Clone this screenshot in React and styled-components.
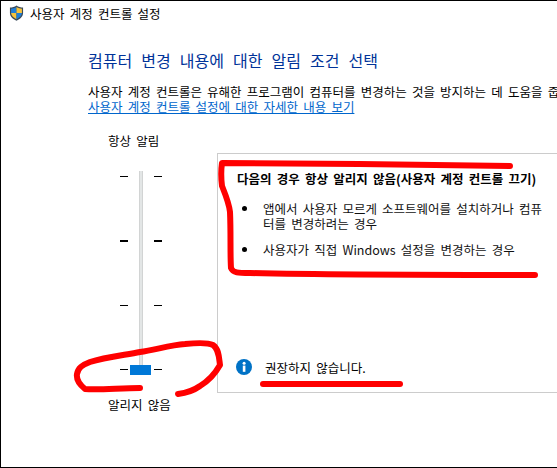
import React from "react";
import styled, { createGlobalStyle } from "styled-components";

const Global = createGlobalStyle`
  html, body { margin: 0; padding: 0; background: #fff; }
  body { width: 557px; height: 468px; overflow: hidden; }
`;
const FONT = `"Noto Sans CJK KR", "Noto Sans", sans-serif`;

const Win = styled.div`
  position: relative; box-sizing: border-box; width: 557px; height: 468px;
  border: 1px solid #000; border-right: 0; background: #fff; overflow: hidden;
  font: 12.5px/15px ${FONT}; color: #000; white-space: nowrap; word-spacing: 2.4px;
  display: flex; flex-direction: column;
`;
const TitleBar = styled.header`
  display: flex; align-items: center; gap: 6px; height: 24px; padding-left: 8px;
`;
const Body = styled.main`
  display: flex; flex-direction: column; padding: 25px 0 0 87px;
`;
const Heading = styled.h1`
  margin: 0; font: 400 16px/20px ${FONT}; color: #003399; word-spacing: 5.5px;
`;
const Intro = styled.p`margin: 14px 0 0;`;
const HelpLink = styled.a`color: #0066cc; text-decoration: underline;`;
const Row = styled.div`display: flex; align-items: flex-start; margin: 19px 0 0;`;
const Slider = styled.div`
  width: 216px; flex: none; padding-left: 107px; box-sizing: border-box;
  display: flex; flex-direction: column; align-items: flex-start;
`;
const Track = styled.div`
  position: relative; width: 42px; height: 204px; margin: 23px 0 22px 12px;
  display: flex; flex-direction: column; justify-content: space-between; padding: 5px 0; box-sizing: border-box;
`;
const Rail = styled.div`
  position: absolute; left: 19px; top: 0; bottom: 0; width: 4px;
  background: #e3e6e6; border-left: 1px solid #d2d4d4; border-right: 1px solid #d2d4d4; box-sizing: border-box;
`;
const Thumb = styled.div`
  position: absolute; left: 10px; bottom: 0; width: 21px; height: 10px; background: #0078d7;
`;
const TickRow = styled.div`display: flex; justify-content: space-between;`;
const Tick = styled.i`display: block; width: 8px; height: ${p => p.$h}px; background: #000;`;
const Notes = styled.section`
  box-sizing: border-box; width: 400px; height: 240px; flex: none; margin-top: 20px;
  border: 1px solid #ccc; padding: 17px 0 0 19px; display: flex; flex-direction: column;
`;
const NoteTitle = styled.h2`margin: 0; font: 700 12.5px/15px ${FONT};`;
const Bullets = styled.ul`
  margin: 15px 0 0; padding: 0 0 0 26px; width: 284px; white-space: normal; list-style: none;
`;
const Bullet = styled.li`
  position: relative; margin-bottom: 11px; word-break: break-all; line-height: 15px; color: #111;
  &::before {
    content: ""; position: absolute; left: -21px; top: 5px; width: 5px; height: 5px; border-radius: 50%; background: #000;
  }
`;
const Recommend = styled.div`
  display: flex; align-items: center; gap: 13px; margin: 91px 0 0 -1px;
`;
const Scribbles = styled.svg`
  position: absolute; left: -1px; top: -1px; width: 557px; height: 468px; pointer-events: none; filter: blur(0.5px);
`;

const Shield = () => (
  <svg width="15" height="16" viewBox="0 0 16 16" preserveAspectRatio="none" style={{ flex: "none" }}>
    <path d="M8 .5 C10 2 12.6 2.6 15 2.6 V8 C15 11.6 12 14 8 15.7 C4 14 1 11.6 1 8 V2.6 C3.4 2.6 6 2 8 .5Z" fill="#3a4a5a" />
    <path d="M8 2 V8 H2.2 V3.7 C4.2 3.6 6.3 3.1 8 2Z" fill="#1f7fd8" />
    <path d="M8 2 C9.7 3.1 11.8 3.6 13.8 3.7 V8 H8Z" fill="#f6c33c" />
    <path d="M2.2 8 H8 V14.2 C5 12.8 2.5 11 2.2 8Z" fill="#f6c33c" />
    <path d="M8 8 H13.8 C13.5 11 11 12.8 8 14.2Z" fill="#1f7fd8" />
  </svg>
);

const InfoIcon = () => (
  <svg width="16" height="16" viewBox="0 0 16 16" style={{ flex: "none" }}>
    <circle cx="8" cy="8" r="8" fill="#0072c6" />
    <rect x="6.8" y="6.6" width="2.6" height="6.2" fill="#fff" />
    <circle cx="8.1" cy="4.2" r="1.5" fill="#fff" />
  </svg>
);

const ticks = [1, 2, 1, 1];

export default function App() {
  return (
    <Win>
      <Global />
      <TitleBar>
        <Shield />
        <span>사용자 계정 컨트롤 설정</span>
      </TitleBar>
      <Body>
        <Heading>컴퓨터 변경 내용에 대한 알림 조건 선택</Heading>
        <Intro>
          사용자 계정 컨트롤은 유해한 프로그램이 컴퓨터를 변경하는 것을 방지하는 데 도움을 줍니다.
          <br />
          <HelpLink href="#">사용자 계정 컨트롤 설정에 대한 자세한 내용 보기</HelpLink>
        </Intro>
      </Body>
      <Row>
        <Slider>
          <span>항상 알림</span>
          <Track>
            <Rail />
            {ticks.map((h, i) => (
              <TickRow key={i}>
                <Tick $h={h} />
                <Tick $h={h} />
              </TickRow>
            ))}
            <Thumb />
          </Track>
          <span>알리지 않음</span>
        </Slider>
        <Notes>
          <NoteTitle>다음의 경우 항상 알리지 않음(사용자 계정 컨트롤 끄기)</NoteTitle>
          <Bullets>
            <Bullet>앱에서 사용자 모르게 소프트웨어를 설치하거나 컴퓨터를 변경하려는 경우</Bullet>
            <Bullet>사용자가 직접 Windows 설정을 변경하는 경우</Bullet>
          </Bullets>
          <Recommend>
            <InfoIcon />
            <span>권장하지 않습니다.</span>
          </Recommend>
        </Notes>
      </Row>
      <Scribbles viewBox="0 0 557 468" fill="none" stroke="#ff0000" strokeWidth="6" strokeLinecap="round" strokeLinejoin="round">
        <path d="M510 166 C440 165 300 163 222 163 C221 170 221 178 222 186 C226 196 229 203 230 212 C231 235 230 252 231 268 C233 273 238 273 250 273 C340 275 450 275 535 275" />
        <path d="M140 388 C120 388 100 390 85 389 C80 385 76 380 77 374 C78 368 82 365 90 362 C105 357 125 355 140 352 C155 350 170 345 185 344 C195 343 207 342 213 345 C219 349 219 358 220 365 C216 372 210 380 200 386 C193 391 186 393 178 394" />
        <path d="M263 384 H400" />
      </Scribbles>
    </Win>
  );
}
